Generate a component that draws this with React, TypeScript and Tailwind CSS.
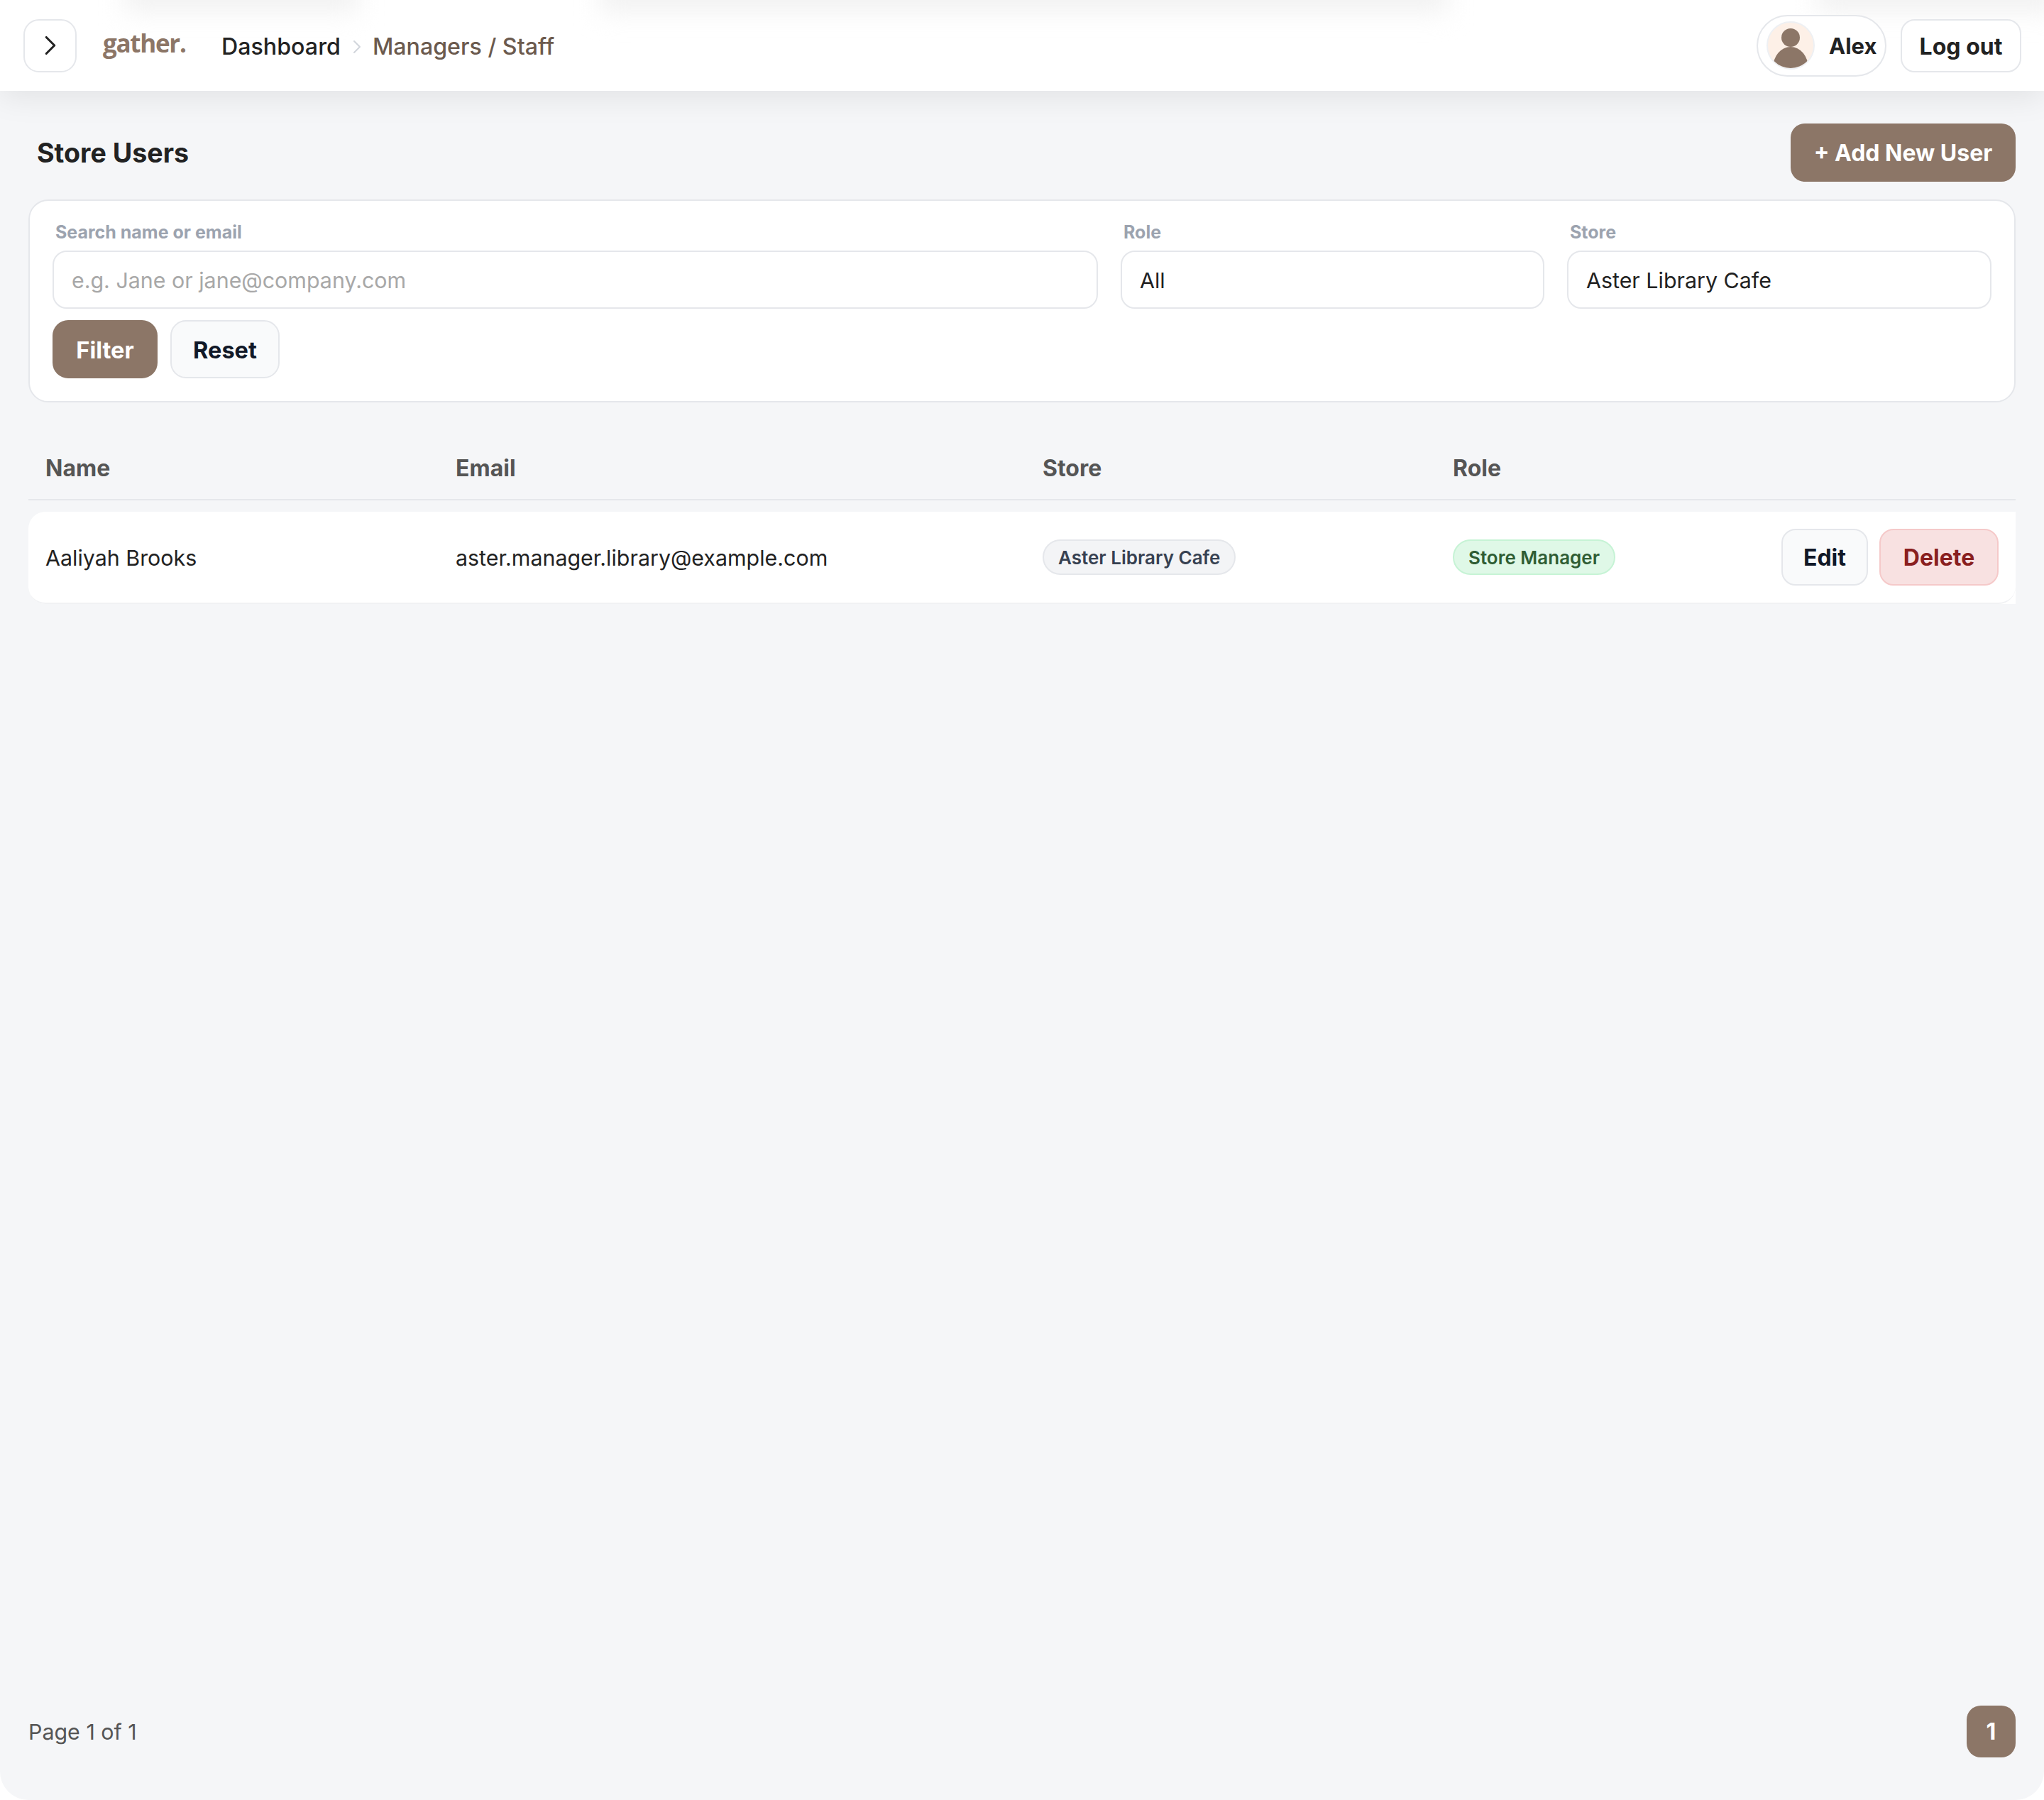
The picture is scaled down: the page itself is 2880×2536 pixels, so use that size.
import { ChevronRight } from 'lucide-react'

const inter = "font-['Inter',sans-serif]"

function Field({ label, value, muted }: { label: string; value: string; muted?: boolean }) {
  return (
    <div className="flex flex-col min-w-0">
      <label className="text-[25px] leading-[36px] font-bold text-[#9ca3af] pl-[4px] pb-[8px]">{label}</label>
      <div className={`h-[82px] flex items-center pl-[25px] pr-[26px] pt-[4px] bg-white border-2 border-[#e5e7eb] rounded-[20px] text-[30.4px] ${muted ? 'text-[#a8a8a8]' : 'text-[#222222]'}`}>
        {value}
      </div>
    </div>
  )
}

export default function App() {
  return (
    <div className={`${inter} w-[2880px] h-[2536px] bg-white text-[#222222]`}>
      <div className="relative flex flex-col h-full bg-[#f5f6f8] rounded-b-[40px] overflow-hidden">
        <header className="relative z-10 h-[128px] shrink-0 flex items-center justify-between pl-[33px] pr-[32px] bg-white overflow-hidden shadow-[0_10px_40px_rgba(0,0,0,0.08)]">
          {/* content scrolled behind the frosted bar */}
          <div className="absolute top-[-34px] left-[175px] w-[330px] h-[50px] bg-[#f1f1f1] blur-[18px]" />
          <div className="absolute top-[-34px] left-[845px] w-[1195px] h-[50px] bg-[#f1f1f1] blur-[18px]" />
          <div className="absolute top-[-34px] left-[2560px] w-[340px] h-[50px] bg-[#f1f1f1] blur-[18px]" />

          <div className="relative flex items-center">
            <button className="w-[75px] h-[75px] flex items-center justify-center border-2 border-[#e5e7eb] rounded-[22px] bg-white">
              <ChevronRight size={46} strokeWidth={1.6} className="text-[#222222]" />
            </button>
            <span className="ml-[37px] w-[118px] pb-[6px] text-[35px] tracking-[-1.3px] font-bold text-[#8c7667] font-['Open_Sans',sans-serif]">gather.</span>
            <nav className="ml-[49px] pt-[4px] flex items-center text-[32.2px] font-medium">
              <span className="text-[#222222]">Dashboard</span>
              <ChevronRight size={32} strokeWidth={1.5} className="ml-[7px] mr-[6px] text-[#d1d5db]" />
              <span className="text-[#6b5a4e]">Managers / Staff</span>
            </nav>
          </div>
          <div className="relative flex items-center gap-[20px]">
            <div className="w-[183px] h-[87px] flex items-center pl-[12px] gap-[20px] border-2 border-[#e5e7eb] rounded-full bg-white">
              <div className="w-[68px] h-[68px] shrink-0 rounded-full bg-[#fdf0e7] border-2 border-[#eef0f3] overflow-hidden">
                <svg viewBox="0 0 64 64" className="w-full h-full">
                  <circle cx="32" cy="21" r="13" fill="#8c7667" />
                  <ellipse cx="32" cy="64" rx="25" ry="30" fill="#8c7667" />
                </svg>
              </div>
              <span className="pt-[2px] text-[31px] font-bold">Alex</span>
            </div>
            <button className="w-[170px] h-[75px] pt-[4px] border-2 border-[#e5e7eb] rounded-[20px] bg-white text-[32px] font-bold">Log out</button>
          </div>
        </header>

        <main className="flex-1 flex flex-col px-[40px] min-h-0">
          <div className="flex items-center justify-between pt-[46px] pb-[25px]">
            <h1 className="pl-[12px] pt-[2px] text-[37.6px] font-bold text-[#222222]">Store Users</h1>
            <button className="w-[317px] h-[82px] pt-[2px] bg-[#8c7667] rounded-[20px] text-white text-[32px] font-bold">+ Add New User</button>
          </div>

          <section className="bg-white border-2 border-[#e5e7eb] rounded-[28px] px-[32px] pt-[26px] h-[286px]">
            <div className="grid grid-cols-[1473px_597px_598px] gap-x-[32px]">
              <Field label="Search name or email" value="e.g. Jane or jane@company.com" muted />
              <Field label="Role" value="All" />
              <Field label="Store" value="Aster Library Cafe" />
            </div>
            <div className="flex gap-[18px] mt-[16px]">
              <button className="w-[148px] h-[82px] pt-[4px] bg-[#8c7667] rounded-[22px] text-white text-[32.5px] font-bold">Filter</button>
              <button className="w-[154px] h-[82px] pt-[4px] bg-[#f9fafb] border-2 border-[#e5e7eb] rounded-[22px] text-[#111827] text-[32.5px] font-bold">Reset</button>
            </div>
          </section>

          <div className="grid grid-cols-[578px_827px_578px_1fr] items-center mt-[36px] h-[102px] pl-[24px] pt-[14px] border-b-2 border-[#e5e7eb] text-[32px] font-bold text-[#555555]">
            <div>Name</div>
            <div>Email</div>
            <div>Store</div>
            <div>Role</div>
          </div>

          <div className="mt-[16px] h-[130px] bg-white rounded-l-[24px]">
            <div className="grid grid-cols-[578px_827px_578px_1fr] items-center h-full pl-[24px] pr-[24px] rounded-[24px] border-b-2 border-[#f1f2f4] text-[30.4px] text-[#222222]">
              <div className="pt-[4px]">Aaliyah Brooks</div>
              <div className="pt-[4px]">aster.manager.library@example.com</div>
              <div>
                <span className="inline-flex items-center h-[50px] px-[20px] rounded-full bg-[#f3f4f6] border-2 border-[#e5e7eb] text-[26px] font-semibold text-[#374151]">Aster Library Cafe</span>
              </div>
              <div className="flex items-center justify-between">
                <span className="inline-flex items-center h-[50px] px-[20px] rounded-full bg-[#dff8e7] border-2 border-[#c6f3d5] text-[26px] font-semibold text-[#2f5d34]">Store Manager</span>
                <div className="flex gap-[16px]">
                  <button className="w-[122px] h-[80px] pt-[2px] bg-[#f9fafb] border-2 border-[#e5e7eb] rounded-[20px] text-[#111827] text-[32px] font-bold">Edit</button>
                  <button className="w-[168px] h-[80px] pt-[2px] bg-[#f8e1e1] border-2 border-[#f5c9c9] rounded-[20px] text-[#8a1f1f] text-[32px] font-bold">Delete</button>
                </div>
              </div>
            </div>
          </div>

          <div className="mt-auto flex items-center justify-between pb-[60px]">
            <span className="pt-[2px] text-[30.4px] text-[#555555]">Page 1 of 1</span>
            <button className="w-[69px] h-[73px] bg-[#8c7667] rounded-[20px] text-white text-[32px] font-bold">1</button>
          </div>
        </main>
      </div>
    </div>
  )
}
